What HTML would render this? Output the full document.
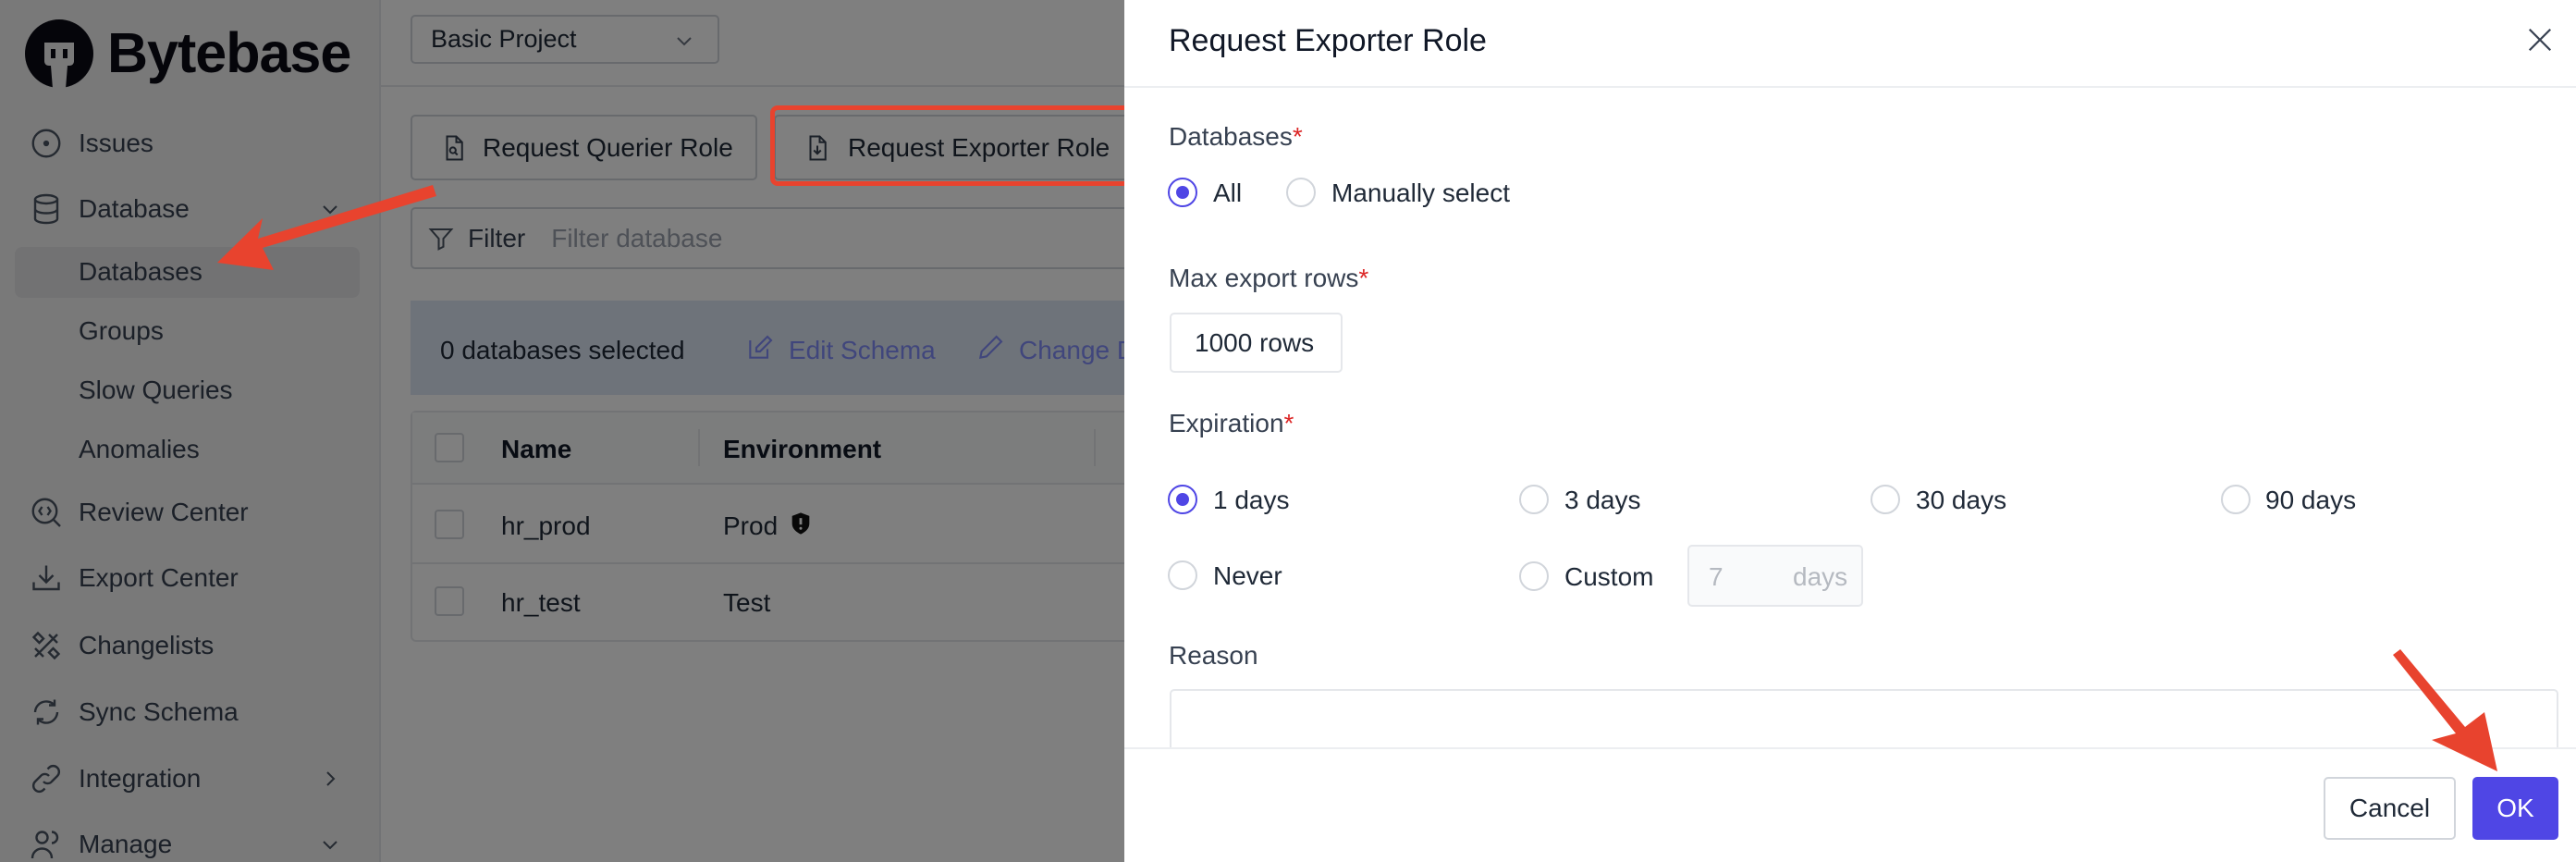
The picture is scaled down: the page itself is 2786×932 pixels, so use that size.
<!DOCTYPE html>
<html><head><meta charset="utf-8">
<style>
*{box-sizing:border-box;margin:0;padding:0}
body{width:2786px;height:932px;overflow:hidden;position:relative;background:#fff;font-family:"Liberation Sans",sans-serif;color:#1f2937}
.abs{position:absolute;white-space:nowrap}
#left{position:absolute;left:0;top:0;width:1216px;height:932px;background:#fff;overflow:hidden}
#side{position:absolute;left:0;top:0;width:412px;height:932px;background:#f2f2f3;border-right:2px solid #e5e7eb}
.nav{position:absolute;left:85px;font-size:28px;color:#374151;line-height:1}
.ic{position:absolute;left:32px;width:36px;height:36px}
.chev{position:absolute;left:345px;width:24px;height:24px}
.btn{position:absolute;border:2px solid #d1d5db;border-radius:5px;background:#fff;font-size:28px;color:#1f2937;display:flex;align-items:center;white-space:nowrap}
.t{position:absolute;font-size:28px;color:#1f2937;line-height:1;white-space:nowrap}
.radio{position:absolute;width:32px;height:32px;border:2px solid #d1d5db;border-radius:50%;background:#fff}
.radio.on{border-color:#4f46e5}
.radio.on:after{content:"";position:absolute;left:7px;top:7px;width:14px;height:14px;border-radius:50%;background:#4f46e5}
.req{color:#dc2626}
.cb{position:absolute;left:470px;width:32px;height:32px;border:2px solid #d1d5db;border-radius:4px;background:#fff}
</style></head><body>
<div id="left">
 <div id="side">
  <svg class="abs" style="left:26px;top:20px" width="76" height="76" viewBox="0 0 76 76"><circle cx="38" cy="38" r="37" fill="#0b0b14"/><path d="M22 26h32v20c0 3-2 5-5 5h-2l-2 25H31l-2-25h-2c-3 0-5-2-5-5z" fill="#f2f2f3"/><rect x="29" y="33" width="5" height="10" fill="#0b0b14"/><rect x="42" y="33" width="5" height="10" fill="#0b0b14"/></svg>
  <div class="abs" style="left:116px;top:22px;font-size:61px;font-weight:bold;color:#0b0b14;letter-spacing:-1px">Bytebase</div>
  <svg class="ic" style="top:137px" viewBox="0 0 24 24" fill="none" stroke="#4b5563" stroke-width="1.6"><circle cx="12" cy="12" r="9.5"/><circle cx="12" cy="12" r="1.3" fill="#4b5563"/></svg>
  <div class="nav" style="top:141px">Issues</div>
  <svg class="ic" style="top:208px" viewBox="0 0 24 24" fill="none" stroke="#4b5563" stroke-width="1.6"><ellipse cx="12" cy="5" rx="8" ry="3"/><path d="M4 5v14c0 1.7 3.6 3 8 3s8-1.3 8-3V5M4 12c0 1.7 3.6 3 8 3s8-1.3 8-3"/></svg>
  <div class="nav" style="top:212px">Database</div>
  <svg class="chev" style="top:214px" viewBox="0 0 24 24" fill="none" stroke="#4b5563" stroke-width="2"><path d="M5 9l7 7 7-7"/></svg>
  <div class="abs" style="left:16px;top:267px;width:373px;height:55px;background:#e4e4e6;border-radius:8px"></div>
  <div class="nav" style="top:280px">Databases</div>
  <div class="nav" style="top:344px">Groups</div>
  <div class="nav" style="top:408px">Slow Queries</div>
  <div class="nav" style="top:472px">Anomalies</div>
  <svg class="ic" style="top:536px" viewBox="0 0 24 24" fill="none" stroke="#4b5563" stroke-width="1.6"><circle cx="11" cy="11" r="8.5"/><path d="M17 17l5 5M9 8l-2 3 2 3M13 8l2 3-2 3"/></svg>
  <div class="nav" style="top:540px">Review Center</div>
  <svg class="ic" style="top:607px" viewBox="0 0 24 24" fill="none" stroke="#4b5563" stroke-width="1.6"><path d="M3 15v5h18v-5M12 3v12M7 10l5 5 5-5"/></svg>
  <div class="nav" style="top:611px">Export Center</div>
  <svg class="ic" style="top:680px" viewBox="0 0 24 24" fill="none" stroke="#4b5563" stroke-width="1.6"><path d="M4 20L20 4M6 3l4 4-3 3-4-4zM17 14l4 4-3 3-4-4zM4 14l6 6M14 4l6 6"/></svg>
  <div class="nav" style="top:684px">Changelists</div>
  <svg class="ic" style="top:752px" viewBox="0 0 24 24" fill="none" stroke="#4b5563" stroke-width="1.6"><path d="M20 12a8 8 0 0 1-14 5M4 12a8 8 0 0 1 14-5M18 3v4h-4M6 21v-4h4"/></svg>
  <div class="nav" style="top:756px">Sync Schema</div>
  <svg class="ic" style="top:824px" viewBox="0 0 24 24" fill="none" stroke="#4b5563" stroke-width="1.6"><path d="M10 14a4 4 0 0 0 6 0l4-4a4 4 0 0 0-6-6l-1 1M14 10a4 4 0 0 0-6 0l-4 4a4 4 0 0 0 6 6l1-1"/></svg>
  <div class="nav" style="top:828px">Integration</div>
  <svg class="chev" style="top:830px" viewBox="0 0 24 24" fill="none" stroke="#4b5563" stroke-width="2"><path d="M9 5l7 7-7 7"/></svg>
  <svg class="ic" style="top:895px" viewBox="0 0 24 24" fill="none" stroke="#4b5563" stroke-width="1.6"><circle cx="9" cy="7" r="4"/><path d="M2 22c0-4 3-7 7-7s7 3 7 7M16 3a4 4 0 0 1 0 8"/></svg>
  <div class="nav" style="top:899px">Manage</div>
  <svg class="chev" style="top:901px" viewBox="0 0 24 24" fill="none" stroke="#4b5563" stroke-width="2"><path d="M5 9l7 7 7-7"/></svg>
 </div>
 <div class="abs" style="left:412px;top:92px;width:804px;height:2px;background:#e5e7eb"></div>
 <div class="btn" style="left:444px;top:16px;width:334px;height:53px;padding-left:20px;font-size:27px">Basic Project
  <svg class="abs" style="left:282px;top:14px" width="24" height="24" viewBox="0 0 24 24" fill="none" stroke="#6b7280" stroke-width="2"><path d="M5 9l7 7 7-7"/></svg></div>
 <div class="btn" style="left:444px;top:124px;width:375px;height:71px;padding-left:30px">
  <svg width="30" height="32" viewBox="0 0 24 24" fill="none" stroke="#374151" stroke-width="1.6"><path d="M6 2h8l5 5v15H6zM14 2v5h5"/><circle cx="11" cy="14" r="2.5"/><path d="M13 16l2 2"/></svg><span style="margin-left:16px">Request Querier Role</span></div>
 <div class="btn" style="left:837px;top:124px;width:400px;height:71px;padding-left:30px">
  <svg width="30" height="32" viewBox="0 0 24 24" fill="none" stroke="#374151" stroke-width="1.6"><path d="M6 2h8l5 5v15H6zM14 2v5h5M12 10v7M9 14l3 3 3-3"/></svg><span style="margin-left:18px">Request Exporter Role</span></div>
 <div class="btn" style="left:444px;top:224px;width:800px;height:67px;padding-left:16px;color:#374151">
  <svg width="30" height="30" viewBox="0 0 24 24" fill="none" stroke="#4b5563" stroke-width="1.6"><path d="M3 4h18l-7 8v7l-4 2v-9z"/></svg><span style="margin-left:14px">Filter</span><span style="margin-left:28px;color:#9ca3af">Filter database</span></div>
 <div class="abs" style="left:444px;top:325px;width:800px;height:102px;background:#dde6f4"></div>
 <div class="abs" style="left:476px;top:363px;font-size:28px;color:#1f2937">0 databases selected</div>
 <svg class="abs" style="left:806px;top:360px" width="32" height="32" viewBox="0 0 24 24" fill="none" stroke="#818cf8" stroke-width="1.6"><path d="M4 6v14h14v-7M18 3l3 3-9 9H9v-3z"/></svg>
 <div class="abs" style="left:853px;top:363px;font-size:28px;color:#818cf8">Edit Schema</div>
 <svg class="abs" style="left:1055px;top:360px" width="32" height="32" viewBox="0 0 24 24" fill="none" stroke="#818cf8" stroke-width="1.6"><path d="M4 20l1-5L17 3l4 4L9 19z"/></svg>
 <div class="abs" style="left:1102px;top:363px;font-size:28px;color:#818cf8">Change Data</div>
 <div class="abs" style="left:444px;top:444px;width:800px;height:250px;border:2px solid #e5e7eb;border-radius:6px;background:#fff"></div>
 <div class="abs" style="left:446px;top:446px;width:800px;height:78px;background:#f9fafb;border-bottom:2px solid #e5e7eb"></div>
 <div class="abs" style="left:446px;top:608px;width:800px;height:2px;background:#e5e7eb"></div>
 <div class="abs" style="left:755px;top:464px;width:2px;height:40px;background:#e5e7eb"></div>
 <div class="abs" style="left:1183px;top:464px;width:2px;height:40px;background:#e5e7eb"></div>
 <div class="cb" style="top:468px"></div><div class="cb" style="top:551px"></div><div class="cb" style="top:634px"></div>
 <div class="abs" style="left:542px;top:470px;font-size:28px;font-weight:bold;color:#111827">Name</div>
 <div class="abs" style="left:782px;top:470px;font-size:28px;font-weight:bold;color:#111827">Environment</div>
 <div class="abs" style="left:542px;top:553px;font-size:28px">hr_prod</div>
 <div class="abs" style="left:782px;top:553px;font-size:28px">Prod</div>
 <svg class="abs" style="left:852px;top:551px" width="28" height="30" viewBox="0 0 24 24"><path d="M12 2l8 3v7c0 5-4 8-8 10-4-2-8-5-8-10V5z" fill="#111"/><path d="M12 7v6" stroke="#fff" stroke-width="2.4"/><circle cx="12" cy="16.5" r="1.3" fill="#fff"/></svg>
 <div class="abs" style="left:542px;top:636px;font-size:28px">hr_test</div>
 <div class="abs" style="left:782px;top:636px;font-size:28px">Test</div>
 <div class="abs" style="left:0;top:0;width:1216px;height:932px;background:rgba(0,0,0,0.5)"></div>
</div>
<div class="abs" style="left:833px;top:114px;width:391px;height:87px;border:5px solid #e8432e;border-radius:8px"></div>
<svg class="abs" style="left:0;top:0" width="2786" height="932">
 <polygon points="235,284 284,236 279,258 468,200 472,212 284,268 296,292" fill="#e8432e"/>
</svg>
<div class="abs" style="left:1216px;top:0;width:1570px;height:932px;background:#fff">
 <div class="abs" style="left:48px;top:25px;font-size:34px;color:#111827">Request Exporter Role</div>
 <svg class="abs" style="left:1516px;top:28px" width="30" height="30" viewBox="0 0 24 24" fill="none" stroke="#374151" stroke-width="1.8"><path d="M3 3l18 18M21 3L3 21"/></svg>
 <div class="abs" style="left:0;top:93px;width:1570px;height:2px;background:#eceef1"></div>
 <div class="t" style="left:48px;top:134px;color:#374151">Databases<span class="req">*</span></div>
 <div class="radio on" style="left:47px;top:192px"></div><div class="t" style="left:96px;top:195px">All</div>
 <div class="radio" style="left:175px;top:192px"></div><div class="t" style="left:224px;top:195px">Manually select</div>
 <div class="t" style="left:48px;top:287px;color:#374151">Max export rows<span class="req">*</span></div>
 <div class="abs" style="left:49px;top:338px;width:187px;height:65px;border:2px solid #e5e7eb;border-radius:5px"></div>
 <div class="t" style="left:76px;top:357px">1000 rows</div>
 <div class="t" style="left:48px;top:444px;color:#374151">Expiration<span class="req">*</span></div>
 <div class="radio on" style="left:47px;top:524px"></div><div class="t" style="left:96px;top:527px">1 days</div>
 <div class="radio" style="left:427px;top:524px"></div><div class="t" style="left:476px;top:527px">3 days</div>
 <div class="radio" style="left:807px;top:524px"></div><div class="t" style="left:856px;top:527px">30 days</div>
 <div class="radio" style="left:1186px;top:524px"></div><div class="t" style="left:1234px;top:527px">90 days</div>
 <div class="radio" style="left:47px;top:606px"></div><div class="t" style="left:96px;top:609px">Never</div>
 <div class="radio" style="left:427px;top:607px"></div><div class="t" style="left:476px;top:610px">Custom</div>
 <div class="abs" style="left:609px;top:589px;width:190px;height:67px;border:2px solid #e5e7eb;border-radius:5px;background:#f9fafb"></div>
 <div class="t" style="left:632px;top:610px;color:#b5b9c0">7</div>
 <div class="t" style="left:723px;top:610px;color:#b5b9c0">days</div>
 <div class="t" style="left:48px;top:695px;color:#374151">Reason</div>
 <div class="abs" style="left:49px;top:745px;width:1502px;height:80px;border:2px solid #e5e7eb;border-radius:5px"></div>
 <div class="abs" style="left:0;top:808px;width:1570px;height:124px;background:#fff;border-top:2px solid #eceef1"></div>
 <div class="abs" style="left:1297px;top:840px;width:143px;height:68px;border:2px solid #d1d5db;border-radius:5px;font-size:28px;display:flex;align-items:center;justify-content:center">Cancel</div>
 <div class="abs" style="left:1458px;top:840px;width:93px;height:68px;background:#4f46e5;border-radius:5px;font-size:28px;color:#fff;display:flex;align-items:center;justify-content:center">OK</div>
</div>
<svg class="abs" style="left:0;top:0" width="2786" height="932">
 <polygon points="2701,834 2630,800 2656,793 2588,708 2596,702 2666,786 2687,770" fill="#e8432e"/>
</svg>
</body></html>
